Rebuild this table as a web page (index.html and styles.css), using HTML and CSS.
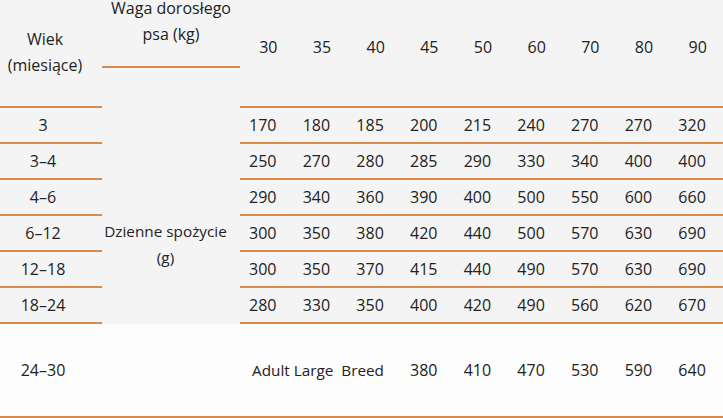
FILE: index.html
```html
<!DOCTYPE html>
<html lang="pl">
<head>
<meta charset="utf-8">
<title>Dzienne spożycie</title>
<link rel="stylesheet" href="styles.css">
</head>
<body>
<div class="feed">
  <div class="cell head-age">Wiek<br>(miesiące)</div>
  <div class="cell head-weight"><span class="lift">Waga dorosłego<br>psa (kg)</span></div>
  <div class="cell head-num">30</div>
  <div class="cell head-num">35</div>
  <div class="cell head-num">40</div>
  <div class="cell head-num">45</div>
  <div class="cell head-num">50</div>
  <div class="cell head-num">60</div>
  <div class="cell head-num">70</div>
  <div class="cell head-num">80</div>
  <div class="cell head-num">90</div>

  <div class="cell daily">Dzienne spożycie<br>(g)</div>

  <div class="cell age">3</div>
  <div class="cell num">170</div><div class="cell num">180</div><div class="cell num">185</div><div class="cell num">200</div><div class="cell num">215</div><div class="cell num">240</div><div class="cell num">270</div><div class="cell num">270</div><div class="cell num">320</div>

  <div class="cell age">3–4</div>
  <div class="cell num">250</div><div class="cell num">270</div><div class="cell num">280</div><div class="cell num">285</div><div class="cell num">290</div><div class="cell num">330</div><div class="cell num">340</div><div class="cell num">400</div><div class="cell num">400</div>

  <div class="cell age">4–6</div>
  <div class="cell num">290</div><div class="cell num">340</div><div class="cell num">360</div><div class="cell num">390</div><div class="cell num">400</div><div class="cell num">500</div><div class="cell num">550</div><div class="cell num">600</div><div class="cell num">660</div>

  <div class="cell age">6–12</div>
  <div class="cell num">300</div><div class="cell num">350</div><div class="cell num">380</div><div class="cell num">420</div><div class="cell num">440</div><div class="cell num">500</div><div class="cell num">570</div><div class="cell num">630</div><div class="cell num">690</div>

  <div class="cell age">12–18</div>
  <div class="cell num">300</div><div class="cell num">350</div><div class="cell num">370</div><div class="cell num">415</div><div class="cell num">440</div><div class="cell num">490</div><div class="cell num">570</div><div class="cell num">630</div><div class="cell num">690</div>

  <div class="cell age">18–24</div>
  <div class="cell num">280</div><div class="cell num">330</div><div class="cell num">350</div><div class="cell num">400</div><div class="cell num">420</div><div class="cell num">490</div><div class="cell num">560</div><div class="cell num">620</div><div class="cell num">670</div>

  <div class="cell age last">24–30</div>
  <div class="cell num last adult">Adult Large&nbsp; Breed</div>
  <div class="cell num last">380</div><div class="cell num last">410</div><div class="cell num last">470</div><div class="cell num last">530</div><div class="cell num last">590</div><div class="cell num last">640</div>
</div>
</body>
</html>
```
FILE: styles.css
```css
html, body {
  margin: 0;
  padding: 0;
}

body {
  width: 723px;
  height: 418px;
  overflow: hidden;
  font-family: "Open Sans", "Noto Sans", "DejaVu Sans", sans-serif;
  font-size: 16px;
  line-height: 26px;
  color: #222;
  background: #fdfdfd;
}

.feed {
  display: grid;
  grid-template-columns: 102px 138px repeat(9, 1fr);
  grid-template-rows: 68px 40px repeat(6, 36px) 94px;
  background: linear-gradient(#f4f4f4 0, #f4f4f4 324px, #fdfdfd 324px);
}

.cell {
  box-sizing: border-box;
  display: flex;
  align-items: center;
  white-space: nowrap;
}

.head-age {
  grid-column: 1;
  grid-row: 1 / span 2;
  justify-content: center;
  text-align: center;
  padding: 0 12px 3px 0;
  border-bottom: 2px solid #d98a4b;
}

.head-weight {
  grid-column: 2;
  grid-row: 1;
  justify-content: center;
  align-items: flex-start;
  text-align: center;
  border-bottom: 2px solid #d98a4b;
}

.lift {
  margin-top: -5px;
}

.head-num {
  grid-row: 1 / span 2;
  justify-content: center;
  padding: 0 0 12px 3px;
  border-bottom: 2px solid #d98a4b;
}

.daily {
  grid-column: 2;
  grid-row: 2 / span 8;
  justify-content: center;
  text-align: center;
  font-size: 15.3px;
  padding: 4px 11px 0 0;
  border-bottom: 2px solid #d98a4b;
}

.age {
  grid-column: 1;
  justify-content: center;
  padding-right: 16px;
  border-bottom: 2px solid #d98a4b;
}

.num {
  padding-left: 9px;
  border-bottom: 2px solid #d98a4b;
}

.adult {
  grid-column: span 3;
  font-size: 15.3px;
  padding-left: 12px;
}
```
